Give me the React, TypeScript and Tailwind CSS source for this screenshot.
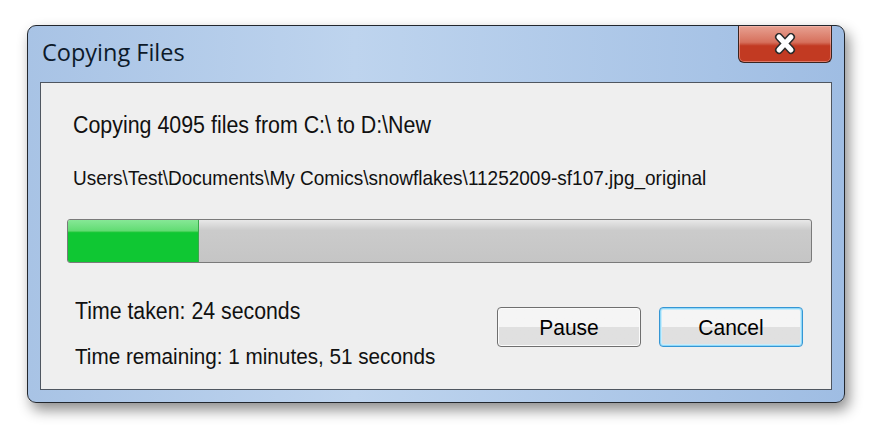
function Button({ label, focused }: { label: string; focused?: boolean }) {
  return (
    <button
      className={`w-[144px] h-[40px] rounded-[4px] border text-[21px] text-black bg-gradient-to-b from-[#f5f5f5] from-50% to-[#e0e0e0] to-50% ${
        focused
          ? "border-[#3596d4] shadow-[inset_0_0_0_1px_#8fd8f8,inset_0_0_0_2px_#c9ecfb]"
          : "border-[#6f6f6f] shadow-[inset_0_0_0_1px_#fbfbfb]"
      }`}
      style={{ fontFamily: "'Liberation Sans', Arial, sans-serif" }}
    >
      <span className="inline-block scale-y-[1.08]">{label}</span>
    </button>
  );
}

function CloseGlyph() {
  return (
    <svg width="30" height="22" viewBox="0 0 30 22">
      <path d="M9 4 L21 17 M21 4 L9 17" stroke="#2b2b2b" strokeWidth="8" strokeLinecap="round" />
      <path d="M9 4 L21 17 M21 4 L9 17" stroke="#ffffff" strokeWidth="5" strokeLinecap="round" />
    </svg>
  );
}

export default function App() {
  const sans = { fontFamily: "'Liberation Sans', Arial, sans-serif" };
  return (
    <div className="w-[876px] h-[434px] bg-white pt-[25px] pl-[27px]">
      {/* Window */}
      <div className="w-[818px] h-[378px] rounded-[9px] border border-[#22272e] bg-gradient-to-r from-[#a8c3e5] via-[#bed4ee] via-40% to-[#9fbde3] shadow-[4px_7px_14px_rgba(0,0,0,0.45)] flex flex-col overflow-hidden">
        {/* Title bar */}
        <div className="h-[56px] flex items-start justify-between pl-[14px]">
          <div
            className="pt-[9px] text-[23.5px] text-[#0d1a2a]"
            style={{ fontFamily: "'Open Sans', 'Noto Sans', sans-serif" }}
          >
            Copying Files
          </div>
          <div className="mr-[12px] w-[94px] h-[37px] rounded-b-[6px] border border-t-0 border-[#3a2420] bg-gradient-to-b from-[#e7a192] from-0% via-[#d6705c] via-45% to-[#c23a22] to-55% flex items-center justify-center shadow-[inset_0_0_0_1px_rgba(255,200,190,0.45)]">
            <CloseGlyph />
          </div>
        </div>

        {/* Content panel */}
        <div className="mx-[12px] h-[308px] border border-[#4f5660] bg-[#efefef] flex flex-col text-[#111]" style={sans}>
          <div className="pl-[32px] pt-[30px] text-[21.4px] leading-[24px]">
            <span className="inline-block scale-y-[1.15] origin-left">Copying 4095 files from C:\ to D:\New</span>
          </div>
          <div className="pl-[32px] pt-[31px] text-[19px] leading-[20px]">
            <span className="inline-block scale-y-[1.1] origin-left">
              Users\Test\Documents\My Comics\snowflakes\11252009-sf107.jpg_original
            </span>
          </div>
          <div className="ml-[26px] mt-[31px] w-[745px] h-[44px] rounded-[3px] border border-[#7a7a7a] bg-gradient-to-b from-[#e8e8e8] from-0% via-[#cbcbcb] via-25% to-[#c5c5c5] flex overflow-hidden">
            <div className="w-[131px] h-full bg-gradient-to-b from-[#86e896] from-0% via-[#62dc74] via-25% to-[#0fc733] to-30% border-r border-[#3aa84c]" />
          </div>
          <div className="flex justify-between items-start">
            <div className="pl-[34px] pt-[36px] leading-[24px] flex flex-col gap-[21px]">
              <div className="text-[21.3px]">
                <span className="inline-block scale-y-[1.08] origin-left">Time taken: 24 seconds</span>
              </div>
              <div className="text-[20.7px]">
                <span className="inline-block scale-y-[1.1] origin-left">Time remaining: 1 minutes, 51 seconds</span>
              </div>
            </div>
            <div className="flex gap-[18px] pt-[44px] pr-[28px]">
              <Button label="Pause" />
              <Button label="Cancel" focused />
            </div>
          </div>
        </div>
      </div>
    </div>
  );
}
